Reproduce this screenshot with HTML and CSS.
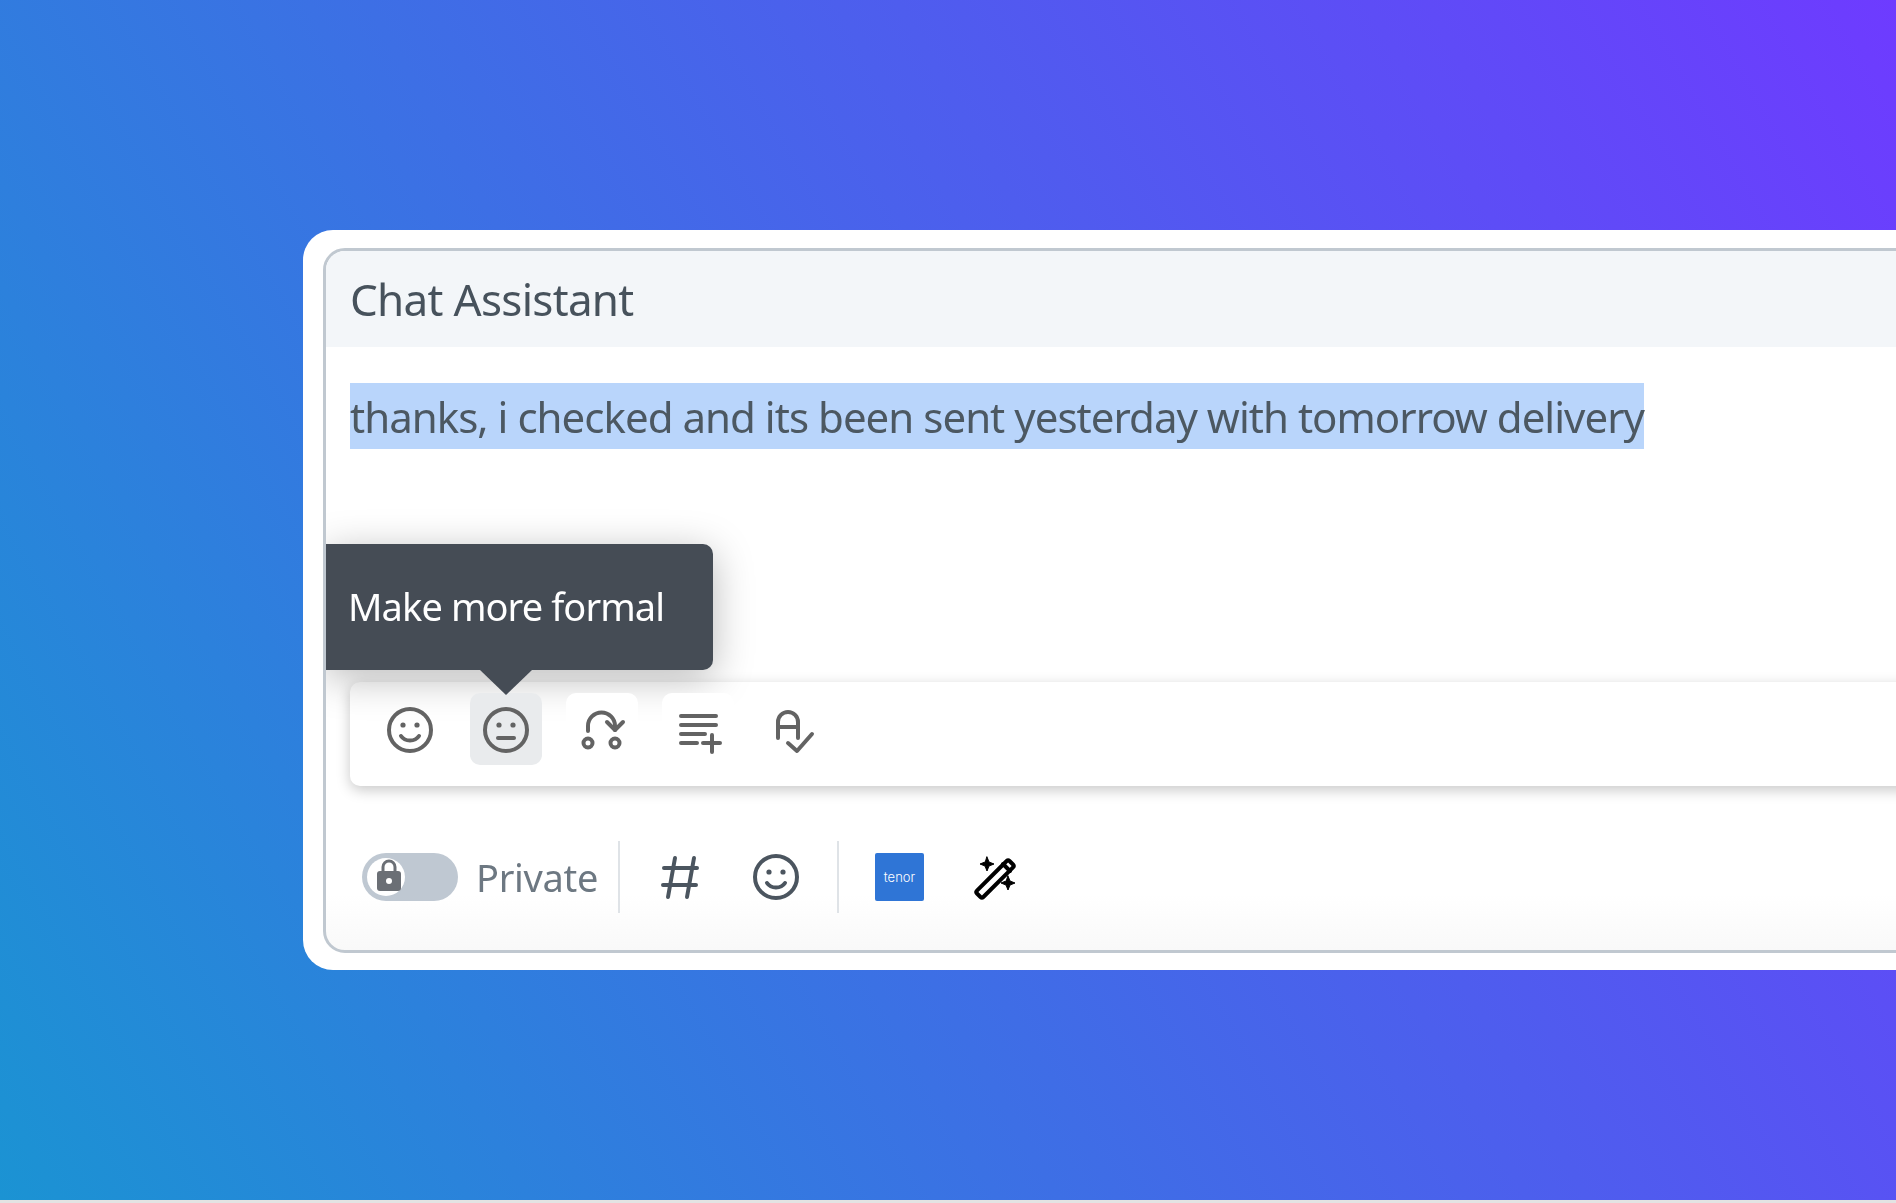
FILE: index.html
```html
<!DOCTYPE html>
<html lang="en">
<head>
    <meta charset="UTF-8">
    <title>Chat Assistant</title>
    <link rel="stylesheet" href="styles.css">
</head>
<body>
    <div class="hero">
        <div class="card">
            <div class="panel">
                <div class="panel-title">Chat Assistant</div>
                <div class="message"><span class="selected">thanks, i checked and its been sent yesterday with tomorrow delivery</span></div>

                <div class="tooltip">Make more formal</div>

                <div class="toolbar">
                    <button class="tool">
                        <svg viewBox="0 0 48 48"><circle cx="24" cy="24" r="21"/><circle class="dot" cx="17" cy="19" r="2.6"/><circle class="dot" cx="31" cy="19" r="2.6"/><path d="M15 30c4 6 14 6 18 0"/></svg>
                    </button>
                    <button class="tool active">
                        <svg viewBox="0 0 48 48"><circle cx="24" cy="24" r="21"/><circle class="dot" cx="17" cy="19" r="2.6"/><circle class="dot" cx="31" cy="19" r="2.6"/><path d="M16 32h16"/></svg>
                    </button>
                    <button class="tool plain">
                        <svg viewBox="0 0 48 48"><circle cx="10" cy="37" r="4.500"/><circle cx="37" cy="37" r="4.500"/><path d="M10 25v-5a13.500 13.500 0 0 1 27 0v4"/><path d="M29 16l8 8 8-8"/></svg>
                    </button>
                    <button class="tool plain">
                        <svg viewBox="0 0 48 48"><path d="M7 10h35M7 19h35M7 28h24M7 37h16M29 37h17M38 29v17"/></svg>
                    </button>
                    <button class="tool">
                        <svg viewBox="0 0 48 48"><path d="M8 32V16a10 10 0 0 1 20 0v16M8 21h20"/><path d="M18 37l9 8 15-17"/></svg>
                    </button>
                </div>

                <div class="composer">
                    <div class="toggle">
                        <div class="knob">
                            <svg viewBox="0 0 24 32"><path class="shackle" d="M6 14V8a6 6 0 0 1 12 0v6"/><rect class="lock" x="0" y="12" width="24" height="20" rx="3"/><circle class="hole" cx="12" cy="22" r="3"/></svg>
                        </div>
                    </div>
                    <span class="private">Private</span>
                    <div class="sep"></div>
                    <button class="action">
                        <svg viewBox="0 0 48 48"><path d="M20 5l-7 39M39 5l-7 39M9 15h33M8 32h33"/></svg>
                    </button>
                    <button class="action">
                        <svg viewBox="0 0 48 48"><circle cx="24" cy="24" r="21"/><circle class="dot" cx="17" cy="19" r="2.6"/><circle class="dot" cx="31" cy="19" r="2.6"/><path d="M15 30c4 6 14 6 18 0"/></svg>
                    </button>
                    <div class="sep"></div>
                    <div class="tenor">tenor</div>
                    <button class="action wand">
                        <svg viewBox="0 0 48 48">
                            <rect x="-23" y="-4.500" width="46" height="9" rx="2" transform="translate(25 26) rotate(-45)"/>
                            <path d="M33 11l7 7"/>
                            <path class="spark" d="M17 4l2 5 5 2-5 2-2 5-2-5-5-2 5-2z"/>
                            <path class="spark" d="M38 23l2 5 5 2-5 2-2 5-2-5-5-2 5-2z"/>
                        </svg>
                    </button>
                </div>
            </div>
        </div>
    </div>
</body>
</html>
```

FILE: styles.css
```css
html, body {
    margin: 0;
    height: 100%;
    overflow: hidden;
    background-color: #e3e3e3;
}
body {
    font-family: "Noto Sans", sans-serif;
}
.hero {
    height: 1200px;
    padding: 230px 0 0 303px;
    box-sizing: border-box;
    overflow: hidden;
    background: linear-gradient(60deg, #1b93d3 0%, #6e3bff 100%);
}
.card {
    width: 1800px;
    height: 740px;
    box-sizing: border-box;
    padding: 18px 0 17px 20px;
    background-color: white;
    border-radius: 30px;
}
.panel {
    position: relative;
    height: 705px;
    box-sizing: border-box;
    border: 3px solid #c0c8d0;
    border-radius: 22px;
    overflow: hidden;
    background: linear-gradient(#fff 92%, #f9f9f9);
    filter: blur(0.5px);
}
.panel-title {
    height: 96px;
    padding-left: 24px;
    display: flex;
    align-items: center;
    font-size: 44px;
    letter-spacing: -0.7px;
    color: #47525c;
    background-color: #f3f6f9;
}
.message {
    padding: 36px 24px 0;
    height: 66px;
    font-size: 42px;
    line-height: 68px;
    letter-spacing: -0.97px;
    color: #4c5862;
}
.selected {
    display: inline-block;
    height: 66px;
    background-color: #b9d5fb;
}
.tooltip {
    position: absolute;
    left: 0;
    top: 293px;
    width: 387px;
    height: 126px;
    box-sizing: border-box;
    padding: 0 0 2px 22px;
    display: flex;
    align-items: center;
    font-size: 38px;
    letter-spacing: -0.9px;
    color: white;
    background-color: #454c55;
    border-radius: 0 10px 10px 0;
    box-shadow: 0 8px 40px rgba(0,0,0,0.28);
}
.tooltip::after {
    content: "";
    position: absolute;
    z-index: 2;
    left: 154px;
    top: 126px;
    border-left: 26px solid transparent;
    border-right: 26px solid transparent;
    border-top: 25px solid #454c55;
}
.toolbar {
    margin: 233px 0 0 24px;
    height: 104px;
    box-sizing: border-box;
    padding: 11px 24px;
    display: flex;
    gap: 24px;
    background-color: white;
    border-radius: 10px;
    box-shadow: 0 4px 14px rgba(0,0,0,0.22);
}
.tool {
    position: relative;
    z-index: 1;
    width: 72px;
    height: 72px;
    padding: 2px 0 0;
    display: flex;
    align-items: center;
    justify-content: center;
    background: none;
    border: none;
    border-radius: 10px;
}
.tool.active {
    background-color: #e9ebed;
}
.tool.plain {
    background-color: white;
}
.tool svg, .action svg {
    width: 48px;
    height: 48px;
    fill: none;
    stroke: #636363;
    stroke-width: 4;
    stroke-linecap: round;
    stroke-linejoin: round;
}
.dot {
    fill: #636363;
    stroke: none !important;
}
.composer {
    margin-top: 55px;
    height: 72px;
    padding-left: 36px;
    display: flex;
    align-items: center;
}
.toggle {
    width: 96px;
    height: 48px;
    box-sizing: border-box;
    padding: 5px;
    background-color: #bfc8d2;
    border-radius: 24px;
}
.knob {
    width: 38px;
    height: 38px;
    display: flex;
    justify-content: center;
    background-color: white;
    border-radius: 50%;
}
.knob svg {
    flex: none;
    width: 24px;
    height: 32px;
    margin: 1px 0 0 5px;
}
.shackle {
    fill: none;
    stroke: #6b6f75;
    stroke-width: 3;
}
.lock {
    fill: #6b6f75;
}
.hole {
    fill: white;
}
.private {
    margin-left: 18px;
    width: 122px;
    font-size: 38px;
    letter-spacing: -0.3px;
    white-space: nowrap;
    color: #6d7882;
}
.sep {
    width: 2px;
    height: 72px;
    background-color: #dfe3e7;
}
.private + .sep {
    margin-left: 20px;
}
.action {
    width: 48px;
    height: 48px;
    padding: 0;
    margin: 0 0 0 35px;
    background: none;
    border: none;
}
.action + .action {
    margin-left: 49px;
}
.action svg {
    stroke: #4b555f;
}
.action .dot {
    fill: #4b555f;
}
.action + .sep {
    margin-left: 37px;
}
.tenor {
    width: 49px;
    height: 48px;
    margin-left: 36px;
    display: flex;
    align-items: center;
    justify-content: center;
    font-family: Inter, sans-serif;
    font-size: 13px;
    font-weight: 300;
    color: white;
    background-color: #2f75d6;
    border-radius: 2px;
}
.action.wand {
    margin-left: 46px;
}
.action.wand svg {
    stroke: black;
}
.spark {
    fill: black;
    stroke-width: 1 !important;
}
```
